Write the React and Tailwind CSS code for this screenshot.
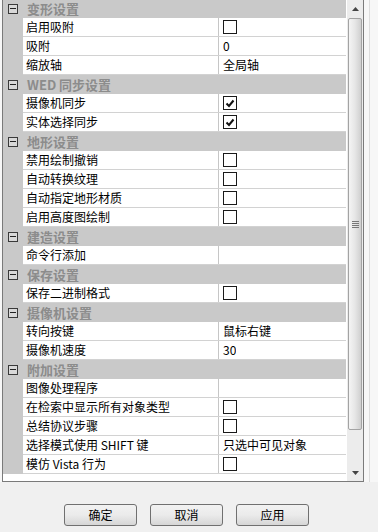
import React from 'react';

const font = { fontFamily: '"Noto Sans CJK SC", "Liberation Sans", sans-serif' };

const groups = [
  { title: '变形设置', rows: [['启用吸附', 'box'], ['吸附', '0'], ['缩放轴', '全局轴']] },
  { title: 'WED 同步设置', rows: [['摄像机同步', 'checked'], ['实体选择同步', 'checked']] },
  {
    title: '地形设置',
    rows: [['禁用绘制撤销', 'box'], ['自动转换纹理', 'box'], ['自动指定地形材质', 'box'], ['启用高度图绘制', 'box']],
  },
  { title: '建造设置', rows: [['命令行添加', '']] },
  { title: '保存设置', rows: [['保存二进制格式', 'box']] },
  { title: '摄像机设置', rows: [['转向按键', '鼠标右键'], ['摄像机速度', '30']] },
  {
    title: '附加设置',
    rows: [
      ['图像处理程序', ''],
      ['在检索中显示所有对象类型', 'box'],
      ['总结协议步骤', 'box'],
      ['选择模式使用 SHIFT 键', '只选中可见对象'],
      ['模仿 Vista 行为', 'box'],
    ],
  },
];

function CheckBox({ checked }) {
  return (
    <span className="flex h-[14px] w-[14px] items-center justify-center border border-[#1a1a1a] bg-white">
      {checked && (
        <svg width="10" height="9" viewBox="0 0 10 9">
          <path d="M1.5 4.5 L4 7 L8.5 1.5" fill="none" stroke="#111" strokeWidth="2" />
        </svg>
      )}
    </span>
  );
}

function Value({ v }) {
  if (v === 'box') return <CheckBox />;
  if (v === 'checked') return <CheckBox checked />;
  return <span className="truncate">{v}</span>;
}

function GroupHeader({ title }) {
  return (
    <div className="flex h-[19px] items-center bg-[#c9c9c9]">
      <div className="flex w-[20px] shrink-0 justify-center">
        <span className="relative flex h-[10px] w-[10px] items-center justify-center border border-[#3a3a3a] bg-[#d8d8d8]">
          <span className="h-px w-[6px] bg-[#222]" />
        </span>
      </div>
      <span className="pl-[4px] text-[13px] font-bold text-[#8c8c8c]">{title}</span>
    </div>
  );
}

function Row({ name, value }) {
  return (
    <div className="flex h-[19px]">
      <div className="w-[20px] shrink-0 bg-[#c9c9c9]" />
      <div className="flex flex-1 border-b border-[#d2d2d2] bg-white text-[12px] text-black">
        <div className="flex w-[196px] shrink-0 items-center truncate border-r border-[#c6c6c6] pl-[3px]">{name}</div>
        <div className="flex min-w-0 flex-1 items-center pl-[4px]">
          <Value v={value} />
        </div>
      </div>
    </div>
  );
}

function Arrow({ up }) {
  return (
    <div className="flex h-[17px] items-center justify-center">
      <svg width="7" height="4" viewBox="0 0 7 4">
        <path d={up ? 'M0 4 L3.5 0 L7 4 Z' : 'M0 0 L3.5 4 L7 0 Z'} fill="#444" />
      </svg>
    </div>
  );
}

function ScrollBar() {
  return (
    <div className="flex w-[16px] shrink-0 flex-col bg-[#ececec]">
      <Arrow up />
      <div className="mx-px mt-px flex h-[412px] items-center justify-center rounded-[2px] border border-[#a3a3a3] bg-gradient-to-r from-[#f4f4f4] via-[#e6e6e6] to-[#cfcfcf]">
        <div className="flex flex-col gap-px">
          <span className="h-px w-[7px] bg-[#777]" />
          <span className="h-px w-[7px] bg-[#777]" />
          <span className="h-px w-[7px] bg-[#777]" />
          <span className="h-px w-[7px] bg-[#777]" />
        </div>
      </div>
      <div className="flex-1" />
      <Arrow />
    </div>
  );
}

function Button({ children }) {
  return (
    <button className="flex h-[22px] w-[73px] items-center justify-center rounded-[3px] border border-[#707070] bg-gradient-to-b from-[#f2f2f2] via-[#ebebeb] to-[#d6d6d6] text-[12px] text-black">
      {children}
    </button>
  );
}

export default function App() {
  return (
    <div className="flex h-[532px] w-[378px] flex-col overflow-hidden bg-[#f0f0f0]" style={font}>
      <div className="flex h-[482px] shrink-0">
        <div className="w-[2px] bg-[#f7f7f7]" />
        <div className="flex w-[362px] border-x border-b border-[#7a7a7a] bg-white">
          <div className="flex-1 overflow-hidden">
            <div className="-mt-px">
              {groups.map((g) => (
                <div key={g.title}>
                  <GroupHeader title={g.title} />
                  {g.rows.map(([n, v]) => (
                    <Row key={n} name={n} value={v} />
                  ))}
                </div>
              ))}
            </div>
          </div>
          <div className="w-px bg-white" />
          <ScrollBar />
        </div>
        <div className="flex flex-1 bg-[#f7f7f7]">
          <div className="w-[5px]" />
          <div className="w-px bg-[#dcdcdc]" />
        </div>
      </div>
      <div className="flex flex-1 items-start pl-[64px] pt-[22px]">
        <div className="flex gap-[13px]">
          <Button>确定</Button>
          <Button>取消</Button>
          <Button>应用</Button>
        </div>
      </div>
    </div>
  );
}
